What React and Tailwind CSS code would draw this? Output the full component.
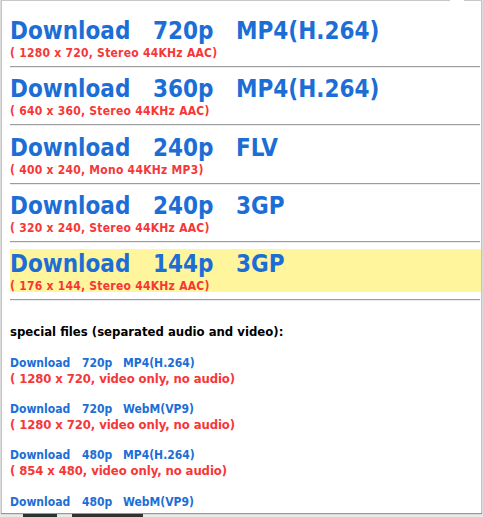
import React from "react";

const big = [
  ["720p", "MP4(H.264)", "( 1280 x 720, Stereo 44KHz AAC)", false],
  ["360p", "MP4(H.264)", "( 640 x 360, Stereo 44KHz AAC)", false],
  ["240p", "FLV", "( 400 x 240, Mono 44KHz MP3)", false],
  ["240p", "3GP", "( 320 x 240, Stereo 44KHz AAC)", false],
  ["144p", "3GP", "( 176 x 144, Stereo 44KHz AAC)", true],
];

const small = [
  ["720p", "MP4(H.264)", "( 1280 x 720, video only, no audio)"],
  ["720p", "WebM(VP9)", "( 1280 x 720, video only, no audio)"],
  ["480p", "MP4(H.264)", "( 854 x 480, video only, no audio)"],
  ["480p", "WebM(VP9)", null],
];

const font = {
  fontFamily: '"DejaVu Sans Condensed", "DejaVu Sans", sans-serif',
  fontStretch: "condensed",
};

export default function App() {
  return (
    <div className="w-[483px] h-[517px] bg-[#e9e9e9] overflow-hidden font-bold" style={font}>
      <div className="ml-[1px] w-[481px] h-[513px] bg-white border-l border-r border-[#c4c4c4] shadow-[0_1px_1px_rgba(0,0,0,0.35)] overflow-hidden flex flex-col">
        <div className="flex h-px shrink-0">
          <div className="w-[448px] bg-[#c8c8c8]" />
          <div className="w-[14px]" />
          <div className="flex-1 bg-[#c8c8c8]" />
        </div>
        <div className="pl-[8px] pt-[15px]">
          {big.map(([res, fmt, sub, hl], i) => (
            <div key={i}>
              <div className={`h-[43px] ${hl ? "bg-[#fff59c]" : ""}`}>
                <div className="grid grid-cols-[143px_83px_auto] text-[24px] leading-[31px] text-[#1c6ed6] whitespace-nowrap">
                  <span>Download</span>
                  <span>{res}</span>
                  <span>{fmt}</span>
                </div>
                <div className="text-[12px] leading-[12px] tracking-[0.25px] text-[#f73737] whitespace-nowrap">{sub}</div>
              </div>
              <div className="mt-[7px] mb-[6.33px] mr-[1px] border-t border-b border-t-[#9c9c9c] border-b-[#ececec]" />
            </div>
          ))}
          <div className="mt-[23px] text-[13px] leading-[16px] text-black whitespace-nowrap">
            special files (separated audio and video):
          </div>
          <div className="mt-[15.5px] flex flex-col gap-[16.3px]">
            {small.map(([res, fmt, sub], i) => (
              <div key={i}>
                <div className="grid grid-cols-[72px_41px_auto] text-[12px] leading-[15px] text-[#1c6ed6] whitespace-nowrap">
                  <span>Download</span>
                  <span>{res}</span>
                  <span>{fmt}</span>
                </div>
                {sub && (
                  <div className="text-[13px] leading-[15px] tracking-[-0.1px] text-[#f73737] whitespace-nowrap">{sub}</div>
                )}
              </div>
            ))}
          </div>
        </div>
      </div>
      <div className="flex h-[4px] mt-[1px]">
        <div className="w-[23px]" />
        <div className="w-[34px] bg-[#2b3330]" />
        <div className="w-[15px]" />
        <div className="w-[71px] bg-[#35302c]" />
      </div>
    </div>
  );
}
